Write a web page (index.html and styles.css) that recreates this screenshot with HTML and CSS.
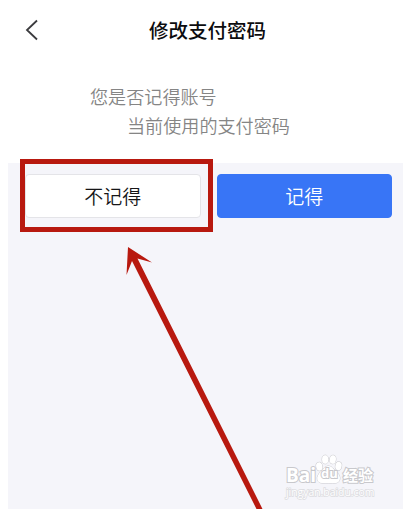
FILE: index.html
```html
<!DOCTYPE html>
<html lang="zh-CN">

<head>
  <meta charset="UTF-8">
  <meta name="viewport" content="width=device-width, initial-scale=1.0">
  <title>修改支付密码</title>
  <link rel="stylesheet" href="styles.css">
</head>

<body>
  <div class="page">
    <div class="header">
      <a href="#" class="back-link" aria-label="返回">
        <svg width="14" height="22" viewBox="0 0 14 22">
          <path d="M13 1.500 L3 11 L13 20.500" fill="none" stroke="#3b3b3e" stroke-width="1.800" />
        </svg>
      </a>
      <h1>修改支付密码</h1>
    </div>

    <div class="question">
      <p>您是否记得账号</p>
      <p class="indent">当前使用的支付密码</p>
    </div>

    <div class="content">
      <div class="actions">
        <button class="btn">不记得</button>
        <button class="btn btn-primary">记得</button>
      </div>
    </div>

    <!-- annotation over the page -->
    <div class="highlight"></div>
    <svg class="arrow" width="140" height="262" viewBox="0 0 140 262">
      <path d="M8 0 L32 15.500 L17.500 11.500 L142.500 262 L136.500 262 L12 14 L6.500 28 Z" fill="#b8190f" />
    </svg>

    <div class="watermark">
      <div class="logo">
        <span class="logo-bai">Bai</span>
        <span class="paw">
          <svg width="28" height="30" viewBox="0 0 28 30">
            <g fill="#fff" stroke="#c8c8cc" stroke-width="1">
              <ellipse cx="4.300" cy="12.500" rx="3.100" ry="4.200" transform="rotate(-12 4.300 12.500)" />
              <ellipse cx="10.200" cy="5.500" rx="3.100" ry="4.300" />
              <ellipse cx="17.800" cy="5.500" rx="3.100" ry="4.300" transform="rotate(8 17.800 5.500)" />
              <ellipse cx="23.500" cy="12" rx="3.100" ry="4.200" transform="rotate(12 23.500 12)" />
              <path d="M13.500 12 C17 12 18.500 15.500 21 17.500 C27 22 25.500 29 20.500 29 C17 29 10.500 29 7 29 C1.500 29 0.500 22.500 5.500 18 C8.500 15.500 10 12 13.500 12 Z" />
            </g>
          </svg>
          <span class="logo-du">du</span>
        </span>
        <span class="logo-cn">经验</span>
      </div>
      <div class="site">jingyan.baidu.com</div>
    </div>
  </div>
</body>

</html>
```
FILE: styles.css
```css
* {
  margin: 0;
  padding: 0;
  box-sizing: border-box;
}

body {
  font-family: "Noto Sans CJK SC", sans-serif;
  background: #fff;
  color: #161618;
}

.page {
  position: relative;
  height: 509px;
  display: flex;
  flex-direction: column;
  overflow: hidden;
}

.header {
  height: 60px;
  padding: 0 20px 0 24px;
  display: grid;
  grid-template-columns: 14px 1fr;
  align-items: center;
}

.back-link {
  display: flex;
}

.header h1 {
  padding-right: 6px;
  font-size: 19.5px;
  line-height: 30px;
  font-weight: 500;
  text-align: center;
  color: #0c0c0e;
}

.question {
  height: 103px;
  padding: 22px 0 0 90px;
  font-size: 18.1px;
  line-height: 29px;
  font-weight: 350;
  color: #858585;
}

.question .indent {
  padding-left: 37px;
}

.content {
  flex: 1;
  margin-left: 8px;
  padding: 11px 11px 0 17px;
  background: #f5f5fa;
}

.actions {
  display: grid;
  grid-template-columns: 1fr 1fr;
  gap: 16px;
}

.btn {
  height: 44px;
  border: 1px solid #e4e4e8;
  border-radius: 4px;
  background: #fff;
  color: #161618;
  font-family: inherit;
  font-size: 19px;
  line-height: 28px;
  font-weight: 350;
}

.btn-primary {
  border-color: #3875f6;
  background: #3875f6;
  color: #fff;
}

.highlight {
  position: absolute;
  left: 20px;
  top: 159px;
  width: 193px;
  height: 73px;
  border: 5px solid #b8190f;
}

.arrow {
  position: absolute;
  left: 120px;
  top: 247px;
  overflow: visible;
}

.watermark {
  position: absolute;
  left: 286px;
  top: 454px;
  width: 92px;
  color: #fff;
  font-family: "Open Sans", "Noto Sans CJK SC", sans-serif;
}

.logo {
  display: flex;
  align-items: flex-end;
  height: 30px;
  line-height: 18px;
  font-weight: 700;
  -webkit-text-stroke: 2px #c8c8cc;
  paint-order: stroke fill;
}

.logo-bai {
  width: 29px;
  font-size: 19px;
}

.paw {
  position: relative;
  height: 30px;
}

.paw svg {
  display: block;
}

.logo-du {
  position: absolute;
  left: 6px;
  bottom: 3px;
  font-size: 13px;
  line-height: 16px;
}

.logo-cn {
  font-size: 15px;
}

.site {
  margin-top: 2px;
  font-size: 10.4px;
  line-height: 12px;
  -webkit-text-stroke: 1.5px #dcdce0;
  paint-order: stroke fill;
}
```
